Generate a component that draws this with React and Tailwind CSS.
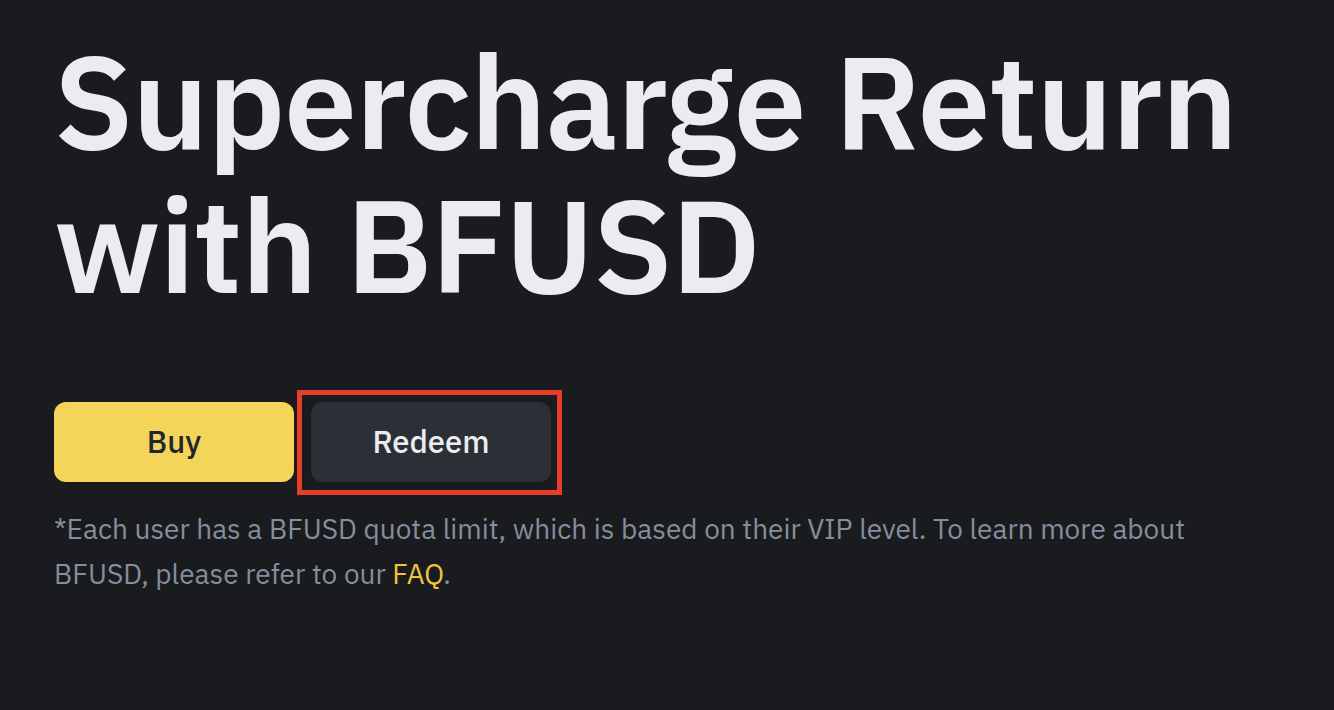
import React from 'react';

const font = { fontFamily: '"IBM Plex Sans", Inter, "Noto Sans", sans-serif' };

const App = () => {
  return (
    <div
      className="w-[1334px] h-[710px] bg-[#1a1b1f] overflow-hidden pl-[54px] pt-[29px]"
      style={font}
    >
      <h1 className="text-[130px] leading-[144px] font-semibold text-[#eaecef] tracking-[-1.2px]">
        Supercharge Return
        <br />
        with BFUSD
      </h1>

      <div className="flex items-center gap-[17px] mt-[85px]">
        <button className="w-[240px] h-[80px] rounded-[12px] bg-[#f4d55a] text-[#202630] text-[31px] font-medium">
          Buy
        </button>
        <div className="relative">
          <button className="w-[240px] h-[80px] rounded-[12px] bg-[#2b2f36] text-[#eaecef] text-[31px] font-medium">
            Redeem
          </button>
          <div className="absolute -left-[14px] -top-[12px] w-[265px] h-[105px] border-[5px] border-[#e63e27] pointer-events-none" />
        </div>
      </div>

      <p className="mt-[24px] w-[1160px] text-[28px] leading-[45px] text-[#848e9c]">
        *Each user has a BFUSD quota limit, which is based on their VIP level. To learn more about
        BFUSD, please refer to our <span className="text-[#f0c43a]">FAQ</span>.
      </p>
    </div>
  );
};

export default App;
